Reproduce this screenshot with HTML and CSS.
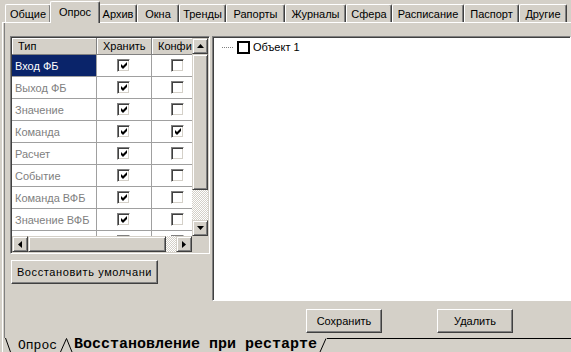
FILE: index.html
```html
<!DOCTYPE html>
<html lang="ru">
<head>
<meta charset="utf-8">
<title>Опрос</title>
<link rel="stylesheet" href="styles.css">
</head>
<body>
<div class="tabs">
  <div class="tab t-obsh">Общие</div>
  <div class="tab sel t-opros">Опрос</div>
  <div class="tab t-arch">Архив</div>
  <div class="tab t-okna">Окна</div>
  <div class="tab t-trend">Тренды</div>
  <div class="tab t-rap">Рапорты</div>
  <div class="tab t-jur">Журналы</div>
  <div class="tab t-sfera">Сфера</div>
  <div class="tab t-rasp">Расписание</div>
  <div class="tab t-pasp">Паспорт</div>
  <div class="tab t-drug">Другие</div>
</div>
<div class="page">
  <div class="sheet">
    <div class="leftcol">
      <div class="table">
        <div class="view">
          <div class="hdr">
            <div class="hc">Тип</div>
            <div class="hc">Хранить</div>
            <div class="hc">Конфиг</div>
          </div>
          <div class="body">
            <div class="row"><div class="c name selcell">Вход ФБ</div><div class="c mid"><span class="cb on"><svg width="7" height="7" viewBox="0 0 7 7"><path d="M0 2 L2 4 L6 0 L6 3 L2 7 L0 5 Z"/></svg></span></div><div class="c cf"><span class="cb"></span></div></div>
            <div class="row"><div class="c name">Выход ФБ</div><div class="c mid"><span class="cb on"><svg width="7" height="7" viewBox="0 0 7 7"><path d="M0 2 L2 4 L6 0 L6 3 L2 7 L0 5 Z"/></svg></span></div><div class="c cf"><span class="cb"></span></div></div>
            <div class="row"><div class="c name">Значение</div><div class="c mid"><span class="cb on"><svg width="7" height="7" viewBox="0 0 7 7"><path d="M0 2 L2 4 L6 0 L6 3 L2 7 L0 5 Z"/></svg></span></div><div class="c cf"><span class="cb"></span></div></div>
            <div class="row"><div class="c name">Команда</div><div class="c mid"><span class="cb on"><svg width="7" height="7" viewBox="0 0 7 7"><path d="M0 2 L2 4 L6 0 L6 3 L2 7 L0 5 Z"/></svg></span></div><div class="c cf"><span class="cb on"><svg width="7" height="7" viewBox="0 0 7 7"><path d="M0 2 L2 4 L6 0 L6 3 L2 7 L0 5 Z"/></svg></span></div></div>
            <div class="row"><div class="c name">Расчет</div><div class="c mid"><span class="cb on"><svg width="7" height="7" viewBox="0 0 7 7"><path d="M0 2 L2 4 L6 0 L6 3 L2 7 L0 5 Z"/></svg></span></div><div class="c cf"><span class="cb"></span></div></div>
            <div class="row"><div class="c name">Событие</div><div class="c mid"><span class="cb on"><svg width="7" height="7" viewBox="0 0 7 7"><path d="M0 2 L2 4 L6 0 L6 3 L2 7 L0 5 Z"/></svg></span></div><div class="c cf"><span class="cb"></span></div></div>
            <div class="row"><div class="c name">Команда ВФБ</div><div class="c mid"><span class="cb on"><svg width="7" height="7" viewBox="0 0 7 7"><path d="M0 2 L2 4 L6 0 L6 3 L2 7 L0 5 Z"/></svg></span></div><div class="c cf"><span class="cb"></span></div></div>
            <div class="row"><div class="c name">Значение ВФБ</div><div class="c mid"><span class="cb on"><svg width="7" height="7" viewBox="0 0 7 7"><path d="M0 2 L2 4 L6 0 L6 3 L2 7 L0 5 Z"/></svg></span></div><div class="c cf"><span class="cb"></span></div></div>
            <div class="row"><div class="c name"></div><div class="c mid"><span class="cb on"></span></div><div class="c cf"><span class="cb"></span></div></div>
          </div>
        </div>
        <div class="vscroll">
          <div class="sbtn"><svg width="7" height="4" viewBox="0 0 7 4"><path d="M3.5 0 L7 4 L0 4 Z"/></svg></div>
          <div class="vthumb"></div>
          <div class="track"></div>
          <div class="sbtn"><svg width="7" height="4" viewBox="0 0 7 4"><path d="M0 0 L7 0 L3.5 4 Z"/></svg></div>
        </div>
        <div class="hscroll">
          <div class="sbtn"><svg width="4" height="7" viewBox="0 0 4 7"><path d="M4 0 L4 7 L0 3.5 Z"/></svg></div>
          <div class="hthumb"></div>
          <div class="track"></div>
          <div class="sbtn"><svg width="4" height="7" viewBox="0 0 4 7"><path d="M0 0 L4 3.5 L0 7 Z"/></svg></div>
        </div>
        <div class="corner"></div>
      </div>
      <div class="btn restore">Восстановить умолчани</div>
    </div>
    <div class="tree">
      <div class="node"><span class="dots"></span><span class="nbox"></span><span class="nlabel">Объект 1</span></div>
    </div>
    <div class="actions">
      <div class="btn act">Сохранить</div>
      <div class="btn act">Удалить</div>
    </div>
  </div>
  <div class="sheettabs">
    <svg class="edge" width="6" height="14" viewBox="0 0 6 14"><path d="M0.5 0 L5.5 14" stroke="#000" fill="none"/></svg>
    <span class="stab">Опрос</span>
    <svg class="edge" width="14" height="14" viewBox="0 0 14 14"><path d="M0.5 14 L6.5 0.5 L12 14" stroke="#000" fill="none"/></svg>
    <span class="stab active">Восстановление при рестарте</span>
    <svg class="edge" width="8" height="14" viewBox="0 0 8 14"><path d="M1 14 L7 0.5" stroke="#000" fill="none"/></svg>
    <span class="strest"></span>
  </div>
</div>
</body>
</html>
```

FILE: styles.css
```css
* { box-sizing: border-box; }
html, body { margin: 0; padding: 0; }
body {
  width: 571px;
  height: 352px;
  overflow: hidden;
  background: #d4d0c8;
  font-family: "Liberation Sans", Tahoma, Arial, sans-serif;
  font-size: 11px;
  color: #000;
}

/* top tabs */
.tabs {
  display: flex;
  align-items: flex-end;
  height: 22px;
  padding-left: 5px;
}
.tab {
  flex: none;
  height: 18px;
  padding-top: 2px;
  border-left: 1px solid #fff;
  border-top: 1px solid #fff;
  border-right: 1px solid #404040;
  box-shadow: inset -1px 0 #808080;
  border-top-left-radius: 2px;
  border-top-right-radius: 2px;
  white-space: nowrap;
  text-align: center;
  line-height: 14px;
}
.tab.sel {
  height: 22px;
  margin: 0 -1px -1px -1px;
  padding-top: 3px;
  background: #d4d0c8;
  position: relative;
  z-index: 1;
}
.t-obsh { width: 46px; }
.t-opros { width: 50px; }
.t-arch { width: 38px; }
.t-okna { width: 42px; }
.t-trend { width: 47px; }
.t-rap { width: 59px; }
.t-jur { width: 61px; }
.t-sfera { width: 46px; }
.t-rasp { width: 72px; }
.t-pasp { width: 55px; }
.t-drug { width: 48px; }

/* page */
.page {
  margin-left: 2px;
  height: 330px;
  border-left: 1px solid #fff;
  border-top: 1px solid #fff;
  display: flex;
  flex-direction: column;
}
.sheet {
  margin-left: 1px;
  height: 315px;
  border-left: 1px solid #808080;
  padding: 13px 0 0 5px;
  display: grid;
  grid-template-columns: 200px 1fr;
  grid-template-rows: 265px 32px;
  column-gap: 2px;
}

.leftcol {
  display: flex;
  flex-direction: column;
  align-items: flex-start;
  gap: 6px;
}

/* table */
.table {
  width: 200px;
  height: 218px;
  border: 1px solid;
  border-color: #808080 #fff #fff #808080;
  box-shadow: inset 1px 1px #404040, inset -1px -1px #d4d0c8;
  padding: 1px;
  display: grid;
  grid-template-columns: 180px 16px;
  grid-template-rows: 198px 16px;
  background: #d4d0c8;
}
.view {
  overflow: hidden;
  background: #fff;
}
.hdr {
  display: grid;
  grid-template-columns: 85px 55px 60px;
  height: 17px;
  background: #d4d0c8;
}
.hc {
  height: 17px;
  border-right: 1px solid #808080;
  border-bottom: 1px solid #808080;
  box-shadow: inset 1px 1px #fff;
  padding-left: 6px;
  line-height: 16px;
  white-space: nowrap;
  overflow: hidden;
}
.body {
  height: 181px;
  overflow: hidden;
}
.row {
  display: grid;
  grid-template-columns: 85px 55px 60px;
  height: 22px;
}
.c {
  height: 22px;
  border-right: 1px solid #a0a0a0;
  border-bottom: 1px solid #a0a0a0;
  display: flex;
  align-items: center;
}
.name {
  padding-left: 3px;
  color: #808080;
  white-space: nowrap;
}
.selcell {
  background: #0a246a;
  color: #fff;
}
.mid { justify-content: center; padding-right: 1px; }
.cf { padding-left: 19px; }
.cb {
  width: 13px;
  height: 13px;
  background: #fff;
  border: 1px solid;
  border-color: #808080 #fff #fff #808080;
  box-shadow: inset 1px 1px #404040, inset -1px -1px #d4d0c8;
  display: flex;
  align-items: center;
  justify-content: center;
}
.cb svg { display: block; fill: #000; margin-left: 1px; }

/* scrollbars */
.vscroll {
  display: flex;
  flex-direction: column;
}
.hscroll {
  display: flex;
}
.sbtn {
  width: 16px;
  height: 16px;
  flex: none;
  background: #d4d0c8;
  border: 1px solid;
  border-color: #d4d0c8 #404040 #404040 #d4d0c8;
  box-shadow: inset 1px 1px #fff, inset -1px -1px #808080;
  display: flex;
  align-items: center;
  justify-content: center;
}
.sbtn svg { display: block; fill: #000; }
.vthumb, .hthumb {
  flex: none;
  background: #d4d0c8;
  border: 1px solid;
  border-color: #d4d0c8 #404040 #404040 #d4d0c8;
  box-shadow: inset 1px 1px #fff, inset -1px -1px #808080;
}
.vthumb { width: 16px; height: 136px; }
.hthumb { height: 16px; width: 138px; }
.track {
  flex: 1;
  background-color: #fff;
  background-image:
    linear-gradient(45deg, #d4d0c8 25%, transparent 25%, transparent 75%, #d4d0c8 75%),
    linear-gradient(45deg, #d4d0c8 25%, transparent 25%, transparent 75%, #d4d0c8 75%);
  background-size: 2px 2px;
  background-position: 0 0, 1px 1px;
}
.corner { background: #d4d0c8; }

/* buttons */
.btn {
  height: 24px;
  background: #d4d0c8;
  border: 1px solid;
  border-color: #fff #404040 #404040 #fff;
  box-shadow: inset -1px -1px #808080;
  display: flex;
  align-items: center;
  justify-content: center;
  white-space: nowrap;
}
.restore {
  width: 147px;
  margin-left: 1px;
  letter-spacing: 0.6px;
}
.act { width: 76px; }

/* tree */
.tree {
  height: 265px;
  background: #fff;
  border: 1px solid;
  border-color: #808080 #fff #fff #808080;
  box-shadow: inset 1px 1px #404040;
  padding: 3px 0 0 9px;
}
.node {
  display: flex;
  align-items: center;
  height: 14px;
}
.dots {
  width: 12px;
  height: 1px;
  margin-right: 3px;
  background-image: linear-gradient(90deg, #808080 50%, transparent 50%);
  background-size: 2px 1px;
}
.nbox {
  width: 13px;
  height: 13px;
  border: 2px solid #000;
  margin-right: 3px;
}
.nlabel { line-height: 13px; }

.actions {
  grid-column: 2;
  grid-row: 2;
  display: flex;
  gap: 55px;
  padding: 8px 0 0 94px;
}

/* bottom sheet tabs */
.sheettabs {
  display: flex;
  height: 14px;
  padding-left: 2px;
  align-items: stretch;
}
.edge { display: block; flex: none; }
.stab {
  font-family: "Liberation Mono", "Courier New", monospace;
  font-size: 13px;
  line-height: 13px;
  padding: 1px 0 0 7px;
  width: 49px;
  white-space: nowrap;
}
.stab.active {
  font-weight: bold;
  font-size: 15px;
  line-height: 14px;
  padding: 0;
  width: 245px;
}
.strest {
  flex: 1;
  border-top: 1px solid #000;
}
```
